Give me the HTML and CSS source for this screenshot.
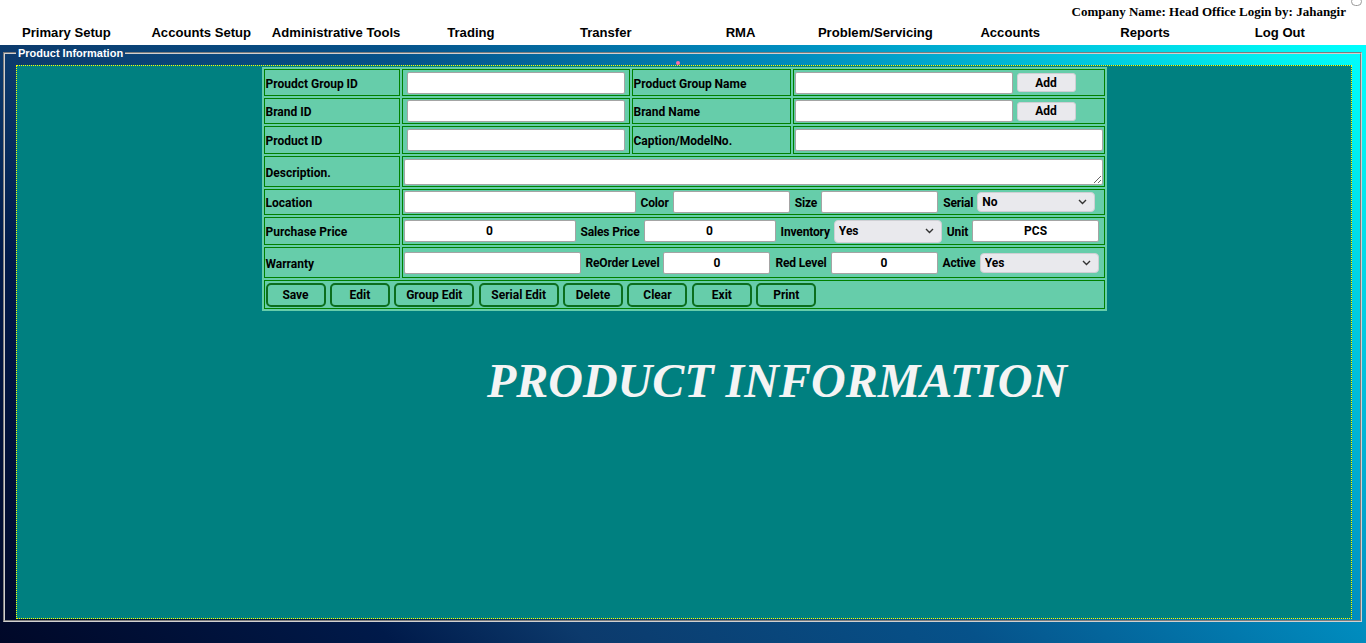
FILE: index.html
```html
<!DOCTYPE html>
<html>
<head>
<meta charset="utf-8">
<title>Product Information</title>
<link rel="stylesheet" href="styles.css">
</head>
<body>
<header class="top">
  <div class="company">Company Name: Head Office Login by: Jahangir</div>
  <nav class="menu">
    <a>Primary Setup</a>
    <a>Accounts Setup</a>
    <a>Administrative Tools</a>
    <a>Trading</a>
    <a>Transfer</a>
    <a>RMA</a>
    <a>Problem/Servicing</a>
    <a>Accounts</a>
    <a>Reports</a>
    <a>Log Out</a>
  </nav>
  <span class="pill"></span>
</header>
<main class="stage">
  <fieldset class="frame">
    <legend class="legend">Product Information</legend>
    <span class="dot"></span>
    <div class="panel">
      <table class="form">
        <colgroup>
          <col class="c1"><col class="c2"><col class="c3"><col class="c4">
        </colgroup>
        <tr class="r1">
          <td class="lbl">Proudct Group ID</td>
          <td class="fld"><input class="in w218" type="text"></td>
          <td class="lbl">Product Group Name</td>
          <td class="fld2"><input class="in w218" type="text"><button class="add">Add</button></td>
        </tr>
        <tr class="r2">
          <td class="lbl">Brand ID</td>
          <td class="fld"><input class="in w218" type="text"></td>
          <td class="lbl">Brand Name</td>
          <td class="fld2"><input class="in w218" type="text"><button class="add">Add</button></td>
        </tr>
        <tr class="r3">
          <td class="lbl">Product ID</td>
          <td class="fld"><input class="in w218" type="text"></td>
          <td class="lbl">Caption/ModelNo.</td>
          <td class="fld2"><input class="in w308" type="text"></td>
        </tr>
        <tr class="r4">
          <td class="lbl">Description.</td>
          <td class="wide" colspan="3"><textarea class="desc"></textarea></td>
        </tr>
        <tr class="r5">
          <td class="lbl">Location</td>
          <td class="wide" colspan="3">
            <div class="line">
              <input class="in w232" type="text">
              <span class="tag">Color</span>
              <input class="in w117" type="text">
              <span class="tag">Size</span>
              <input class="in w117" type="text">
              <span class="tag">Serial</span>
              <span class="sel"><select class="pick w118 h20"><option>No</option><option>Yes</option></select><svg class="chev" width="9" height="6" viewBox="0 0 9 6"><path d="M1 1 L4.5 4.5 L8 1" fill="none" stroke="#333" stroke-width="1.4"/></svg></span>
            </div>
          </td>
        </tr>
        <tr class="r6">
          <td class="lbl">Purchase Price</td>
          <td class="wide" colspan="3">
            <div class="line">
              <input class="in w172 num" type="text" value="0">
              <span class="tag">Sales Price</span>
              <input class="in w132 num" type="text" value="0">
              <span class="tag">Inventory</span>
              <span class="sel"><select class="pick w108 h23"><option>Yes</option><option>No</option></select><svg class="chev" width="9" height="6" viewBox="0 0 9 6"><path d="M1 1 L4.5 4.5 L8 1" fill="none" stroke="#333" stroke-width="1.4"/></svg></span>
              <span class="tag">Unit</span>
              <input class="in w127 num" type="text" value="PCS">
            </div>
          </td>
        </tr>
        <tr class="r7">
          <td class="lbl">Warranty</td>
          <td class="wide" colspan="3">
            <div class="line">
              <input class="in w177" type="text">
              <span class="tag">ReOrder Level</span>
              <input class="in w107 num" type="text" value="0">
              <span class="tag">Red Level</span>
              <input class="in w107 num" type="text" value="0">
              <span class="tag">Active</span>
              <span class="sel"><select class="pick w119 h20"><option>Yes</option><option>No</option></select><svg class="chev" width="9" height="6" viewBox="0 0 9 6"><path d="M1 1 L4.5 4.5 L8 1" fill="none" stroke="#333" stroke-width="1.4"/></svg></span>
            </div>
          </td>
        </tr>
        <tr class="r8">
          <td class="btns" colspan="4">
            <div class="bar">
              <button class="act">Save</button>
              <button class="act">Edit</button>
              <button class="act big">Group Edit</button>
              <button class="act big">Serial Edit</button>
              <button class="act">Delete</button>
              <button class="act">Clear</button>
              <button class="act">Exit</button>
              <button class="act">Print</button>
            </div>
          </td>
        </tr>
      </table>
      <h1 class="title">PRODUCT INFORMATION</h1>
    </div>
  </fieldset>
</main>
</body>
</html>
```
FILE: styles.css
```css
* { box-sizing: border-box; }
html, body { margin: 0; padding: 0; }
body {
  width: 1366px;
  height: 643px;
  overflow: hidden;
  background: #ffffff;
  font-family: "Liberation Sans", Arial, sans-serif;
}
.top {
  position: relative;
  height: 45px;
  background: #ffffff;
}
.company {
  padding-top: 4px;
  height: 20px;
  line-height: 16px;
  text-align: right;
  padding-right: 20px;
  font-family: "Liberation Serif", "Times New Roman", serif;
  font-weight: bold;
  font-size: 13px;
  color: #000;
}
.menu {
  display: grid;
  grid-template-columns: repeat(10, 134.83px);
  margin-top: 4px;
  margin-left: -1px;
  height: 18px;
  line-height: 18px;
}
.menu a {
  text-align: center;
  font-weight: bold;
  font-size: 13.1px;
  color: #000;
}
.pill {
  position: absolute;
  right: 4px;
  top: -3px;
  width: 11px;
  height: 9px;
  border: 1px solid #9a9a9a;
  border-radius: 5px;
  background: #fff;
}
.stage {
  height: 598px;
  padding-top: 1px;
  background: linear-gradient(45deg,
    #000828 0%,
    #001a4a 20%,
    #0c3a6c 30%,
    #06528a 50%,
    #008cbe 70%,
    #00c4de 84%,
    #00f2f2 95%,
    #00ffff 100%);
}
.frame {
  position: relative;
  margin: 0 4px 0 3px;
  padding: 0 8px 1px 11px;
  border: 2px groove #d0d0d0;
  min-width: 0;
}
.legend {
  padding: 0 2px;
  font-size: 11px;
  line-height: 14px;
  font-weight: bold;
  color: #ffffff;
}
.dot {
  position: absolute;
  left: 671px;
  top: 1px;
  width: 4px;
  height: 4px;
  border-radius: 2px;
  background: #ff6fa8;
}
.panel {
  margin-top: 5px;
  height: 554px;
  background: #008080;
  border: 1px dotted #ffff00;
  padding-top: 1px;
}
.form {
  margin: 0 auto;
  width: 845px;
  table-layout: fixed;
  border-collapse: separate;
  border-spacing: 2px;
  background: #66cdaa;
  font-family: Roboto, "Liberation Sans", Arial, sans-serif;
  font-weight: bold;
  font-size: 12px;
  color: #000;
}
.c1 { width: 136px; }
.c2 { width: 228px; }
.c3 { width: 159px; }
.c4 { width: 312px; }
.form td {
  border: 1px solid #008000;
  padding: 0;
  vertical-align: middle;
}
.r1 td { height: 27px; }
.r2 td { height: 26px; }
.r3 td { height: 28px; }
.r4 td { height: 31px; }
.r5 td { height: 26px; }
.r6 td { height: 28px; }
.r7 td { height: 31px; }
.r8 td { height: 29px; }
.form td.lbl { padding: 2px 1px 0 1px; white-space: nowrap; }
.form td.fld { padding: 0 4px; }
.form td.fld2 { padding: 0 1px; }
.form td.wide { padding: 0 1px; }
.form td.btns { padding: 0 1px; }
.fld2 { white-space: nowrap; }
.in {
  height: 22px;
  border: 1px solid #a4a4a4;
  border-radius: 2px;
  background: #fff;
  font-family: Roboto, "Liberation Sans", Arial, sans-serif;
  font-weight: bold;
  font-size: 12px;
  padding: 0 3px;
  margin: 0;
  vertical-align: middle;
  color: #000;
}
.num { text-align: center; }
.w218 { width: 218px; }
.w308 { width: 308px; }
.w232 { width: 232px; }
.w117 { width: 117px; }
.w118 { width: 118px; }
.w172 { width: 172px; }
.w132 { width: 132px; }
.w127 { width: 127px; }
.w177 { width: 177px; }
.w107 { width: 107px; }
.w108 { width: 108px; }
.w119 { width: 119px; }
.add {
  margin-left: 4px;
  width: 59px;
  height: 19px;
  vertical-align: middle;
  background: #e9e9ed;
  border: 1px solid #cfcfd4;
  border-radius: 3px;
  font-family: Roboto, "Liberation Sans", Arial, sans-serif;
  font-weight: bold;
  font-size: 12px;
  color: #000;
  padding: 0;
}
.desc {
  display: block;
  width: 699px;
  height: 26px;
  border: 1px solid #a4a4a4;
  border-radius: 2px;
  background: #fff;
  margin: 0;
  resize: both;
}
.line {
  display: flex;
  align-items: center;
  gap: 4px;
  white-space: nowrap;
}
.line .in, .line .sel { flex-shrink: 0; }
.tag { padding-top: 1px; margin-left: 1px; letter-spacing: -0.15px; }
.sel {
  position: relative;
  display: inline-block;
}
.pick {
  display: block;
  -webkit-appearance: none;
  appearance: none;
  background: #e9e9ed;
  border: 1px solid #cfcfd4;
  border-radius: 4px;
  font-family: Roboto, "Liberation Sans", Arial, sans-serif;
  font-weight: bold;
  font-size: 12px;
  color: #000;
  padding: 0 4px;
  margin: 0;
}
.h20 { height: 20px; }
.h23 { height: 23px; }
.chev {
  position: absolute;
  right: 8px;
  top: 50%;
  margin-top: -3px;
  pointer-events: none;
}
.bar {
  display: flex;
  gap: 4.4px;
}
.act {
  width: 60px;
  height: 24px;
  background: #66cdaa;
  border: 2px solid #0b6e1e;
  border-radius: 5px;
  font-family: Roboto, "Liberation Sans", Arial, sans-serif;
  font-weight: bold;
  font-size: 12px;
  color: #000;
  padding: 0;
}
.act.big { width: 80px; }
.title {
  margin: 42px 0 0 0;
  padding-left: 186px;
  text-align: center;
  font-family: "Liberation Serif", "Times New Roman", serif;
  font-style: italic;
  font-weight: bold;
  font-size: 48px;
  line-height: 56px;
  color: #f4f4f4;
}
```
